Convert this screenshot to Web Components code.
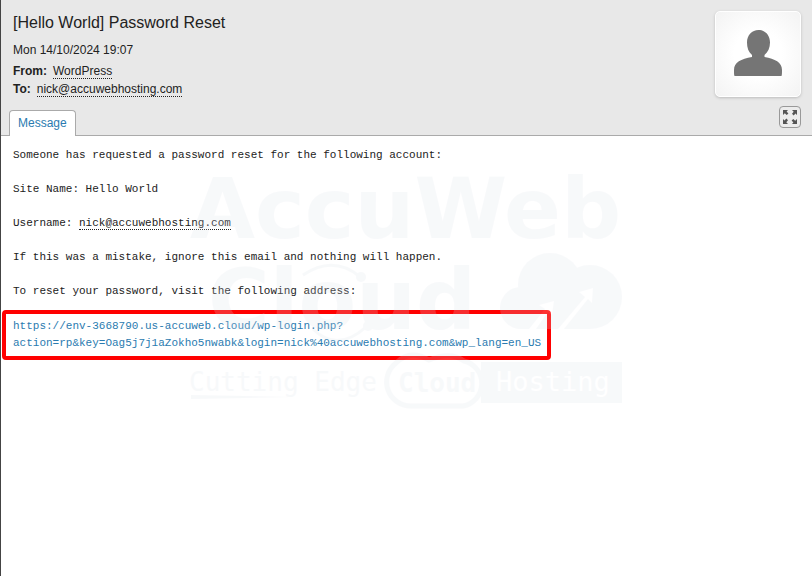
<!DOCTYPE html>
<html lang="en">
<head>
<meta charset="utf-8">
<title>[Hello World] Password Reset</title>
<style>
body {
    margin: 0;
    color: #222;
    background: #fff;
    font: 12px/18px "Liberation Sans", Arial, sans-serif;
}
</style>
</head>
<body>
<mail-view>
    <mail-header slot="header">
        <span slot="subject">[Hello World] Password Reset</span>
        <span slot="date">Mon 14/10/2024 19:07</span>
        <mail-contact slot="people" label="From:">WordPress</mail-contact>
        <mail-contact slot="people" label="To:">nick@accuwebhosting.com</mail-contact>
        <mail-avatar slot="avatar"></mail-avatar>
        <mail-tab slot="tabs">Message</mail-tab>
        <expand-button slot="tools"></expand-button>
    </mail-header>
    <mail-body>
        <mail-line>Someone has requested a password reset for the following account:</mail-line>
        <mail-line>Site Name: Hello World</mail-line>
        <mail-line>Username: <mail-address>nick@accuwebhosting.com</mail-address></mail-line>
        <mail-line>If this was a mistake, ignore this email and nothing will happen.</mail-line>
        <mail-line>To reset your password, visit the following address:</mail-line>
        <reset-link>https://env-3668790.us-accuweb.cloud/wp-login.php?<br>action=rp&amp;key=Oag5j7j1aZokho5nwabk&amp;login=nick%40accuwebhosting.com&amp;wp_lang=en_US</reset-link>
    </mail-body>
    <brand-watermark slot="overlay"></brand-watermark>
</mail-view>

<script>
(function () {
    function define(name, html, setup) {
        const template = document.createElement('template');
        template.innerHTML = html;

        customElements.define(name, class extends HTMLElement {
            constructor() {
                super();
                this.attachShadow({ mode: 'open' }).appendChild(template.content.cloneNode(true));
            }

            connectedCallback() {
                if (setup)
                    setup(this, this.shadowRoot);
            }
        });
    }

    define('mail-view', `
<style>
:host {
    display: flex;
    flex-direction: column;
    position: relative;
    box-sizing: border-box;
    min-height: 100vh;
    border-left: 1px solid #444;
}
</style>
<slot name="header"></slot>
<slot></slot>
<slot name="overlay"></slot>
`);

    define('mail-header', `
<style>
:host {
    display: flex;
    justify-content: space-between;
    background: #e8e8e8;
    border-bottom: 1px solid #aaa;
}
.info {
    display: flex;
    flex-direction: column;
    padding: 13px 0 0 8px;
}
h1 {
    margin: 0 4px 8px;
    font-size: 16px;
    line-height: 20px;
    font-weight: normal;
}
.date {
    margin: 0 4px 3px;
}
.people {
    display: flex;
    flex-direction: column;
    padding: 0 4px;
}
nav {
    display: flex;
    margin: auto 0 -1px;
}
.side {
    display: flex;
    flex-direction: column;
    align-items: flex-end;
    gap: 9px;
    padding: 11px 11px 7px 0;
}
</style>
<div class="info">
    <h1><slot name="subject"></slot></h1>
    <div class="date"><slot name="date"></slot></div>
    <div class="people"><slot name="people"></slot></div>
    <nav><slot name="tabs"></slot></nav>
</div>
<div class="side">
    <slot name="avatar"></slot>
    <slot name="tools"></slot>
</div>
`);

    define('mail-address', `
<style>
:host { display: inline; }
a {
    color: inherit;
    text-decoration: none;
    border-bottom: 1px dotted #222;
}
</style>
<a href="#"><slot></slot></a>
`);

    define('mail-contact', `
<style>
:host {
    display: flex;
    gap: 6px;
    line-height: 18px;
}
</style>
<b></b>
<mail-address><slot></slot></mail-address>
`, (host, root) => {
        root.querySelector('b').textContent = host.getAttribute('label');
    });

    define('mail-avatar', `
<style>
:host {
    display: block;
    width: 84px;
    height: 84px;
    border: 1px solid #fff;
    border-radius: 5px;
    background: radial-gradient(#fff 40%, #f3f3f3);
    box-shadow: 0 1px 3px #bbb;
}
svg { display: block; }
</style>
<svg width="84" height="84" viewBox="0 0 84 84" aria-hidden="true">
    <path fill="#757575" d="M42.500 18C49 18 54 23 54 30.500C54 36 52 40 48.500 43V45C59 47 66 50 66 58C66 61 66 63 65.500 64H18.500C18 63 18 61 18 58C18 50 25 47 36 45V43C32.500 40 31 36 31 30.500C31 23 36 18 42.500 18Z"/>
</svg>
`);

    define('mail-tab', `
<style>
:host { display: block; }
button {
    height: 26px;
    padding: 0 8px 2px;
    border: 1px solid #aaa;
    border-bottom: 0;
    border-radius: 4px 4px 0 0;
    background: #fff;
    color: #2a7bb0;
    font: inherit;
}
</style>
<button type="button"><slot></slot></button>
`);

    define('expand-button', `
<style>
:host { display: block; }
button {
    display: grid;
    place-items: center;
    width: 22px;
    height: 22px;
    padding: 0;
    border: 1px solid #999;
    border-radius: 4px;
    background: #ececec;
}
</style>
<button type="button" aria-label="Full screen">
    <svg width="14" height="14" viewBox="0 0 14 14" fill="#555">
        <path id="corner" d="M0 0H5L3.600 1.500L5.400 3.400L3.700 5L1.800 3.300L0 5Z"/>
        <use href="#corner" transform="rotate(90 7 7)"/>
        <use href="#corner" transform="rotate(180 7 7)"/>
        <use href="#corner" transform="rotate(270 7 7)"/>
    </svg>
</button>
`);

    define('mail-body', `
<style>
:host {
    display: flex;
    flex-direction: column;
    align-items: flex-start;
    gap: 17px;
    padding: 11px 12px;
    font: 11px/17px "Liberation Mono", "Courier New", monospace;
}
</style>
<slot></slot>
`);

    define('mail-line', `
<style>
:host { display: block; }
</style>
<slot></slot>
`);

    define('reset-link', `
<style>
:host {
    display: block;
    margin: -7px -11px;
    padding: 4px 6px 4px 7px;
    border: 4px solid #f00;
    border-radius: 4px;
}
a {
    color: #2a7bb0;
    text-decoration: none;
}
</style>
<a href="#"><slot></slot></a>
`);

    // sits on top of the whole message, faded as one group
    define('brand-watermark', `
<style>
:host {
    display: grid;
    place-items: center;
    position: absolute;
    inset: 0;
    opacity: 0.2;
    pointer-events: none;
}
svg { overflow: visible; }
.word { font: bold 84px "DejaVu Sans", sans-serif; }
.tag { font: 26px "DejaVu Sans Mono", monospace; }
.strong { font-weight: bold; }
.wide { font-size: 27px; }
</style>
<svg width="432" height="242" viewBox="0 0 432 242" fill="#dce2eb">
    <text class="word" x="-1" y="71">AccuWeb</text>
    <text class="word" x="17" y="162">Cloud</text>
    <g fill="none" stroke="#dce2eb" stroke-width="3">
        <path d="M112 108Q142 88 168 109"/>
        <path d="M122 162Q146 186 175 160"/>
    </g>
    <circle cx="170" cy="110" r="5"/>
    <circle cx="177" cy="159" r="5"/>
    <circle cx="330" cy="141" r="21"/>
    <circle cx="359" cy="118" r="32"/>
    <circle cx="399" cy="130" r="32"/>
    <rect x="330" y="130" width="69" height="32"/>
    <g fill="#fff">
        <path d="M367 162L394 130L388 125L402 121L401 136L397 132L373 162Z"/>
        <path d="M338 162L354 142L348 138L363 134L361 148L357 145L345 162Z"/>
    </g>
    <path d="M0 228L98 230L0 232Z"/>
    <rect x="290" y="195" width="141" height="41"/>
    <path fill="#fff" stroke="#dce2eb" stroke-width="5" d="M220 239A24 24 0 0 1 205 196Q219 182 238 193Q260 184 273 194A23 23 0 0 1 272 239Z"/>
    <text class="tag" x="-2" y="224">Cutting Edge</text>
    <text class="tag strong" x="207" y="225">Cloud</text>
    <text class="tag wide" x="305" y="224" fill="#fff">Hosting</text>
</svg>
`);
})();
</script>
</body>
</html>
